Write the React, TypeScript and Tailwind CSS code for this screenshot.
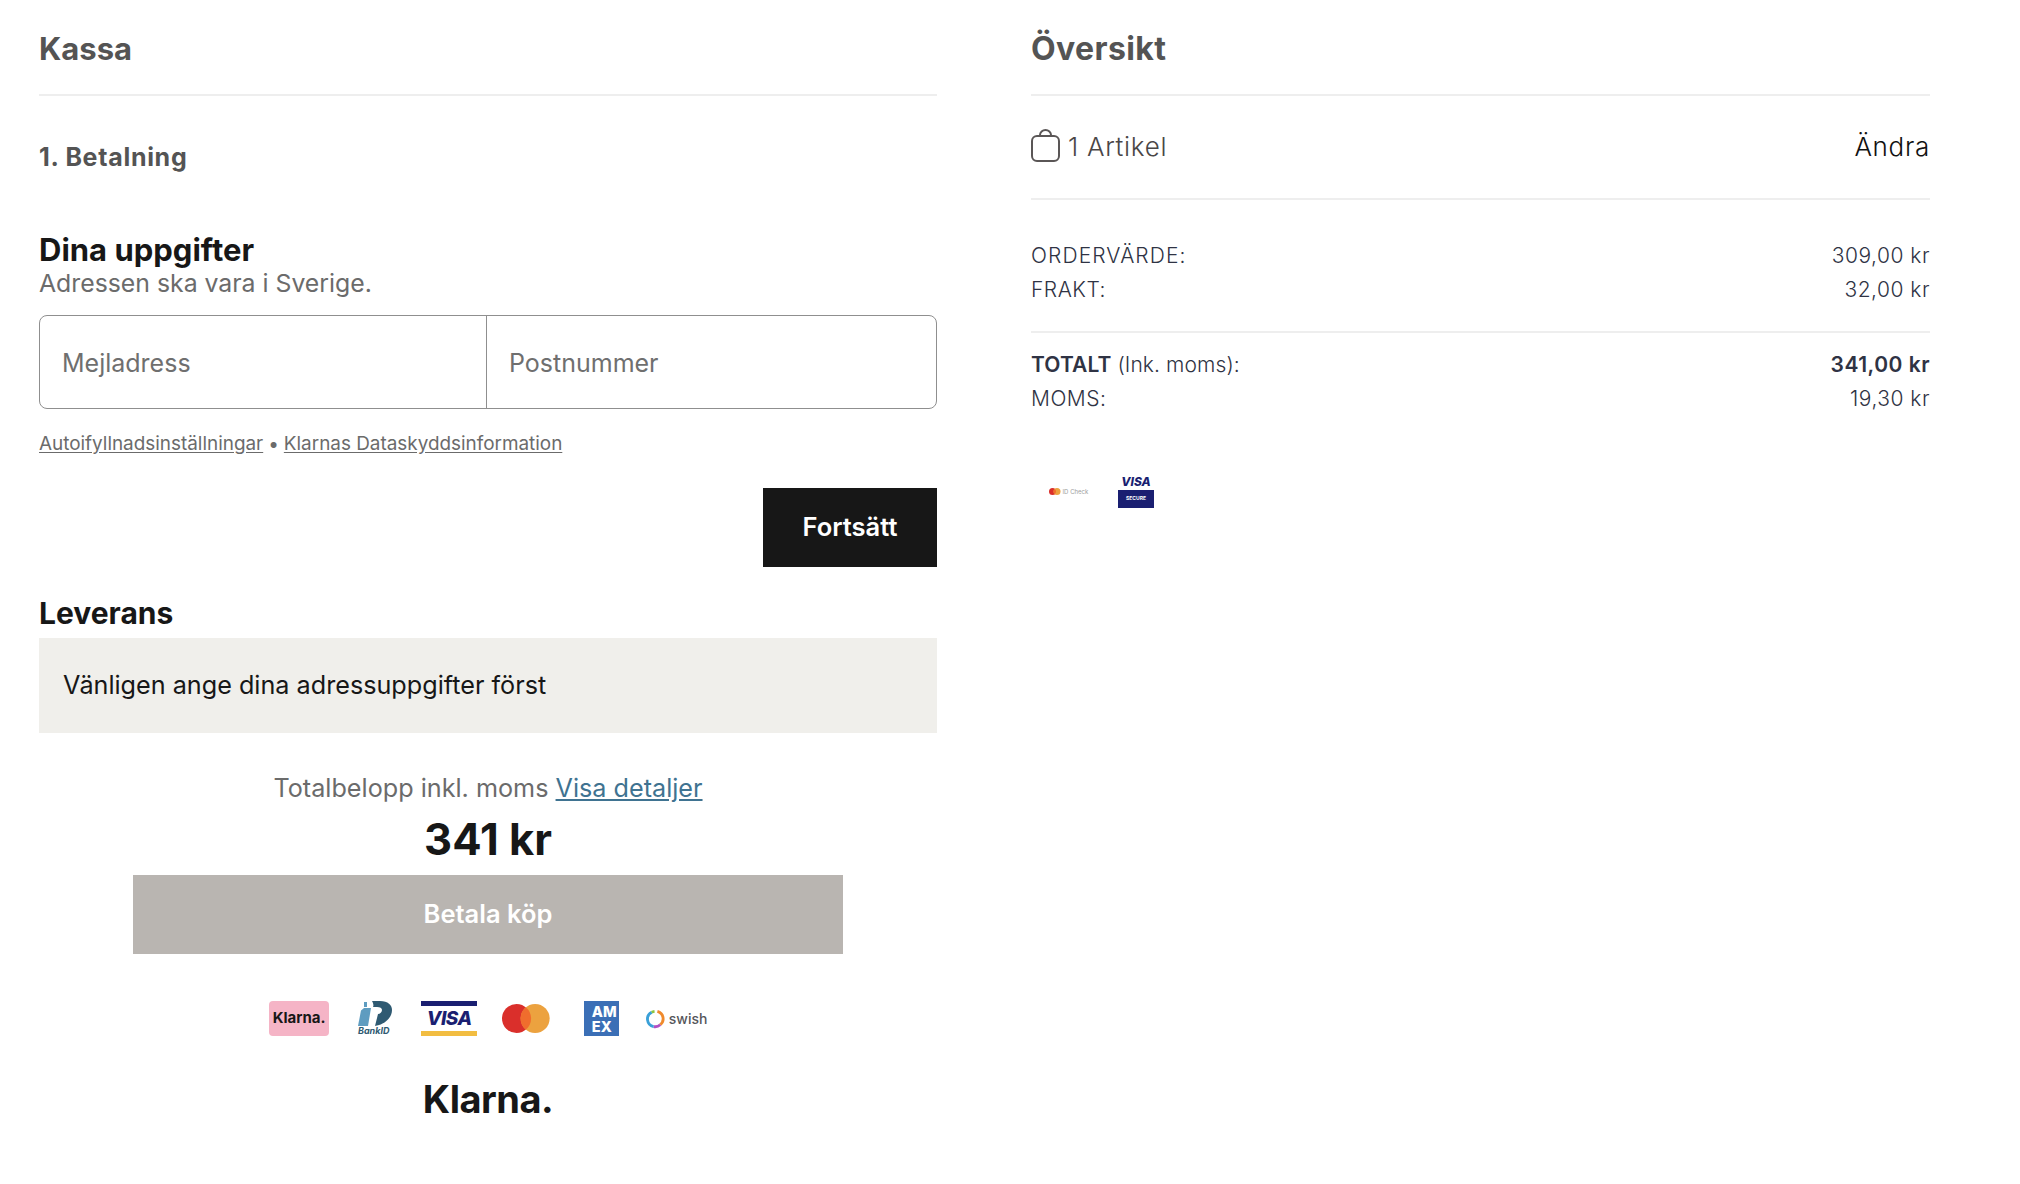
import React from 'react';

const inter = "font-['Inter',sans-serif]";

function SummaryRow({ label, value, bold }: { label: React.ReactNode; value: string; bold?: boolean }) {
  return (
    <div className="flex justify-between items-center h-[34.5px] text-[21px] font-light text-[#2f3344] tracking-[0.5px]">
      <span>{label}</span>
      <span className={bold ? 'font-semibold' : ''}>{value}</span>
    </div>
  );
}

function BankId() {
  return (
    <div className="w-[37px] h-[35px] flex flex-col items-center ml-[26px]">
      <svg width="36" height="25" viewBox="0 0 36 25">
        <path d="M8 7h7l-3 18H2L5 9.500z" fill="#5e9cc0" />
        <rect x="8" y="1" width="3" height="5" fill="#5e9cc0" />
        <path d="M16 0h8c8 0 12 4 12 9 0 7-6 13-13 15l-4 1 3-12c2 0 4-2 4-4 0-2-2-3-5-3h-4c1-2 0-4-1-6z" fill="#2f5a72" />
      </svg>
      <span className="text-[9px] leading-[10px] font-bold italic text-[#2f5a72]">BankID</span>
    </div>
  );
}

function VisaBars() {
  return (
    <div className="w-[56px] h-[35px] flex flex-col justify-between ml-[29px]">
      <div className="h-[5px] bg-[#1a1f71]" />
      <div className="text-center text-[19px] leading-[19px] font-extrabold italic text-[#1a1f71] tracking-[-0.5px]">VISA</div>
      <div className="h-[5px] bg-[#f2bd41]" />
    </div>
  );
}

function Mastercard({ height = 28 }: { height?: number }) {
  return (
    <svg width={(height * 46) / 28} height={height} viewBox="0 0 46 28" className="shrink-0">
      <circle cx="14" cy="14" r="14" fill="#da2f2b" />
      <circle cx="32" cy="14" r="14" fill="#eca23f" />
      <path d="M23 3.200a14 14 0 0 1 0 21.600a14 14 0 0 1 0-21.600z" fill="#f06d2d" />
    </svg>
  );
}

function Amex() {
  return (
    <div className="w-[35px] h-[35px] ml-[34px] bg-[#3b6fb6] flex flex-col justify-center pl-[8px] text-white font-extrabold text-[14.500px] leading-[15px]">
      <span className="whitespace-nowrap">AM</span>
      <span className="whitespace-nowrap">EX</span>
    </div>
  );
}

function Swish() {
  return (
    <div className="flex items-center gap-[4px] ml-[27px] text-[#55565a] text-[14px] font-medium w-[61px]">
      <svg width="19" height="20" viewBox="0 0 20 20" fill="none" strokeWidth="3" className="shrink-0">
        <path d="M12 2a8 8 0 0 1 3 14" stroke="#f08a2c" />
        <path d="M15 16a8 8 0 0 1-7 2" stroke="#b14fc4" />
        <path d="M8 18A8 8 0 0 1 6 3" stroke="#3aa0d8" />
        <path d="M6 3a8 8 0 0 1 3-1" stroke="#8cc63f" />
      </svg>
      <span>swish</span>
    </div>
  );
}

export default function App() {
  return (
    <div className={`w-[2020px] h-[1184px] bg-white flex gap-[94px] pl-[39px] overflow-hidden ${inter}`}>
      {/* Kassa */}
      <div className="w-[898px] shrink-0">
        <div className="h-[96px] border-b-2 border-[#eeeeee] pt-[30px] text-[31px] leading-[38px] font-bold text-[#545454]">
          Kassa
        </div>
        <div className="mt-[46px] text-[25px] leading-[30px] font-bold text-[#545454] tracking-[0.7px]">1. Betalning</div>

        <h2 className="mt-[60px] text-[31px] leading-[36px] font-bold text-[#171717]">Dina uppgifter</h2>
        <p className="text-[24.800px] leading-[30px] text-[#6b6b6b]">Adressen ska vara i Sverige.</p>

        <div className="mt-[17px] h-[94px] border border-[#8f8f8f] rounded-[8px] flex text-[25px] text-[#6f6f6f]">
          <div className="w-[447px] border-r border-[#8f8f8f] flex items-center pl-[22px] pt-[3px]">Mejladress</div>
          <div className="flex-1 flex items-center pl-[22px] pt-[3px]">Postnummer</div>
        </div>

        <div className="mt-[23px] text-[18.900px] leading-[24px] text-[#6b6b6b]">
          <span className="underline underline-offset-2">Autoifyllnadsinställningar</span>
          <span className="mx-[5px]">•</span>
          <span className="underline underline-offset-2">Klarnas Dataskyddsinformation</span>
        </div>

        <div className="flex justify-end mt-[32px]">
          <div className="w-[174px] h-[79px] bg-[#171717] text-white flex items-center justify-center text-[25.500px] font-semibold">
            Fortsätt
          </div>
        </div>

        <h2 className="mt-[28px] text-[30px] leading-[36px] font-bold text-[#171717]">Leverans</h2>
        <div className="mt-[7px] h-[95px] bg-[#f0efeb] flex items-center pl-[24px] text-[25.200px] text-[#171717]">
          Vänligen ange dina adressuppgifter först
        </div>

        <p className="mt-[39px] text-center text-[25.200px] leading-[32px] text-[#6b6b6b]">
          Totalbelopp inkl. moms <span className="text-[#3f7391] underline underline-offset-2">Visa detaljer</span>
        </p>
        <p className="mt-[10px] text-center text-[43.500px] leading-[50px] font-bold text-[#171717]">341 kr</p>
        <div className="mx-[94px] mt-[11px] h-[79px] bg-[#b9b5b1] text-white flex items-center justify-center text-[25.500px] font-semibold">
          Betala köp
        </div>

        <div className="mt-[47px] flex justify-center items-center h-[35px]">
          <div className="w-[60px] h-[35px] bg-[#f5b4c6] rounded-[4px] flex items-center justify-center text-[#171717] text-[15px] font-bold">
            Klarna.
          </div>
          <BankId />
          <VisaBars />
          <div className="ml-[25px]">
            <Mastercard height={29} />
          </div>
          <Amex />
          <Swish />
        </div>
        <p className="mt-[43px] text-center text-[38px] leading-[40px] font-bold text-[#171717] tracking-[-0.5px]">Klarna.</p>
      </div>

      {/* Översikt */}
      <div className="w-[899px] shrink-0">
        <div className="h-[96px] border-b-2 border-[#eeeeee] pt-[30px] text-[32px] leading-[38px] font-bold text-[#545454] tracking-[0.4px]">
          Översikt
        </div>
        <div className="h-[104px] border-b-2 border-[#eeeeee] flex items-center justify-between">
          <div className="flex items-center gap-[8px] text-[26px] font-light text-[#4a4646] tracking-[0.7px] -mt-[2px]">
            <svg width="29" height="33" viewBox="0 0 29 33" fill="none" stroke="#5a5656" strokeWidth="2" className="-mt-[1px]">
              <rect x="1" y="7" width="27" height="25" rx="5" />
              <path d="M9 7V6a5.500 5 0 0 1 11 0v1" />
            </svg>
            <span>1 Artikel</span>
          </div>
          <span className="text-[26px] font-light text-[#111111] tracking-[0.7px] -mt-[2px]">Ändra</span>
        </div>

        <div className="pt-[38px] pb-[24px] border-b-2 border-[#eeeeee]">
          <SummaryRow label={<span className="tracking-[1.100px]">ORDERVÄRDE:</span>} value="309,00 kr" />
          <SummaryRow label="FRAKT:" value="32,00 kr" />
        </div>
        <div className="pt-[14px]">
          <SummaryRow label={<span className="tracking-[0.100px]"><span className="font-semibold">TOTALT</span> (Ink. moms):</span>} value="341,00 kr" bold />
          <SummaryRow label="MOMS:" value="19,30 kr" />
        </div>

        <div className="mt-[58px] flex items-center gap-[19px] pl-[18px]">
          <div className="flex items-center gap-[2px] w-[50px]">
            <Mastercard height={7} />
            <span className="text-[6px] text-[#a0a0a0] whitespace-nowrap">ID Check</span>
          </div>
          <div className="w-[36px] flex flex-col items-center">
            <span className="text-[12px] leading-[16px] font-extrabold italic text-[#1a1f71]">VISA</span>
            <div className="w-[36px] h-[18px] bg-[#1a1f71] text-white text-[5px] font-bold flex items-center justify-center">SECURE</div>
          </div>
        </div>
      </div>
    </div>
  );
}
